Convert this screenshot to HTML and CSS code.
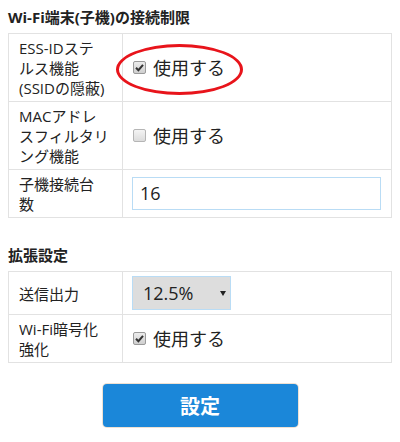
FILE: index.html
```html
<!DOCTYPE html>
<html lang="ja">
<head>
<meta charset="utf-8">
<title>Wi-Fi</title>
<link rel="stylesheet" href="styles.css">
</head>
<body>
<h2 class="section-title first">Wi-Fi端末(子機)の接続制限</h2>
<table class="settings">
  <tr>
    <td class="label">ESS-IDステ<br>ルス機能<br>(SSIDの隠蔽)</td>
    <td class="value has-mark">
      <label class="check"><span class="box checked"><svg viewBox="0 0 13 13" width="13" height="13"><path d="M3 6.8 L5.4 9.2 L10 3.8" fill="none" stroke="#333" stroke-width="2"/></svg></span><span class="check-text">使用する</span></label>
      <span class="circle"></span>
    </td>
  </tr>
  <tr>
    <td class="label">MACアドレ<br>スフィルタリ<br>ング機能</td>
    <td class="value">
      <label class="check"><span class="box"></span><span class="check-text">使用する</span></label>
    </td>
  </tr>
  <tr>
    <td class="label">子機接続台<br>数</td>
    <td class="value"><div class="text-input">16</div></td>
  </tr>
</table>

<h2 class="section-title second">拡張設定</h2>
<table class="settings">
  <tr>
    <td class="label">送信出力</td>
    <td class="value"><div class="select"><span>12.5%</span><span class="arrow"></span></div></td>
  </tr>
  <tr>
    <td class="label">Wi-Fi暗号化<br>強化</td>
    <td class="value">
      <label class="check"><span class="box checked"><svg viewBox="0 0 13 13" width="13" height="13"><path d="M3 6.8 L5.4 9.2 L10 3.8" fill="none" stroke="#333" stroke-width="2"/></svg></span><span class="check-text">使用する</span></label>
    </td>
  </tr>
</table>

<div class="actions"><button class="submit">設定</button></div>
</body>
</html>
```

FILE: styles.css
```css
html, body {
  margin: 0;
  background: #fff;
}
body {
  padding: 8px;
  font-family: "Open Sans", "Noto Sans CJK JP", sans-serif;
  color: #222;
}
.section-title {
  font-size: 15px;
  font-weight: bold;
  line-height: 20px;
  margin: 0 0 5px 0;
  font-family: "Open Sans", "Noto Sans CJK JP", sans-serif;
}
.section-title.first {
  margin-top: -1px;
  margin-bottom: 6px;
}
.section-title.second {
  margin-top: 27px;
  margin-bottom: 6px;
}
.settings {
  width: 384px;
  border-collapse: collapse;
}
.settings td {
  border: 1px solid #e2e2e2;
  font-size: 15px;
  line-height: 20px;
  vertical-align: middle;
}
.settings td.label {
  width: 90px;
  padding: 4px 13px 3px 10px;
  white-space: nowrap;
}
.settings td.value {
  padding: 4px 10px 4px 9px;
}
.settings td.has-mark {
  position: relative;
}
.check {
  display: inline-flex;
  align-items: center;
  gap: 7px;
  padding-left: 1px;
}
.box {
  width: 11px;
  height: 11px;
  border: 1px solid #b5b5b5;
  border-radius: 2px;
  background: linear-gradient(#f4f4f4, #dcdcdc);
  position: relative;
  display: inline-block;
}
.box svg {
  position: absolute;
  left: -1px;
  top: -1px;
}
.box.checked {
  border-color: #9a9a9a;
  background: linear-gradient(#ececec, #cfcfcf);
}
.check-text {
  font-size: 18px;
  line-height: 24px;
}
.circle {
  position: absolute;
  left: -7px;
  top: 10px;
  width: 127px;
  height: 51px;
  box-sizing: border-box;
  border: 3px solid #e8141b;
  border-radius: 50%;
}
.text-input {
  box-sizing: border-box;
  width: 249px;
  height: 33px;
  border: 1px solid #b9dcf5;
  padding: 0 7px;
  font-size: 18px;
  line-height: 31px;
}
.select {
  box-sizing: border-box;
  width: 99px;
  height: 34px;
  border: 1px solid #b9dcf5;
  background: #dddddd;
  display: flex;
  align-items: center;
  justify-content: space-between;
  padding: 0 4px 0 10px;
  font-size: 18px;
}
.select .arrow {
  width: 0;
  height: 0;
  border-left: 3px solid transparent;
  border-right: 3px solid transparent;
  border-top: 5px solid #222;
}
.actions {
  display: flex;
  justify-content: center;
  margin-top: 21px;
}
.submit {
  width: 195px;
  height: 43px;
  background: #1b87d9;
  color: #fff;
  border: none;
  border-radius: 4px;
  box-shadow: 0 0 0 1px rgba(210, 170, 130, 0.35);
  font-family: "Noto Sans CJK JP", sans-serif;
  font-size: 20px;
  font-weight: bold;
  cursor: pointer;
}
```
